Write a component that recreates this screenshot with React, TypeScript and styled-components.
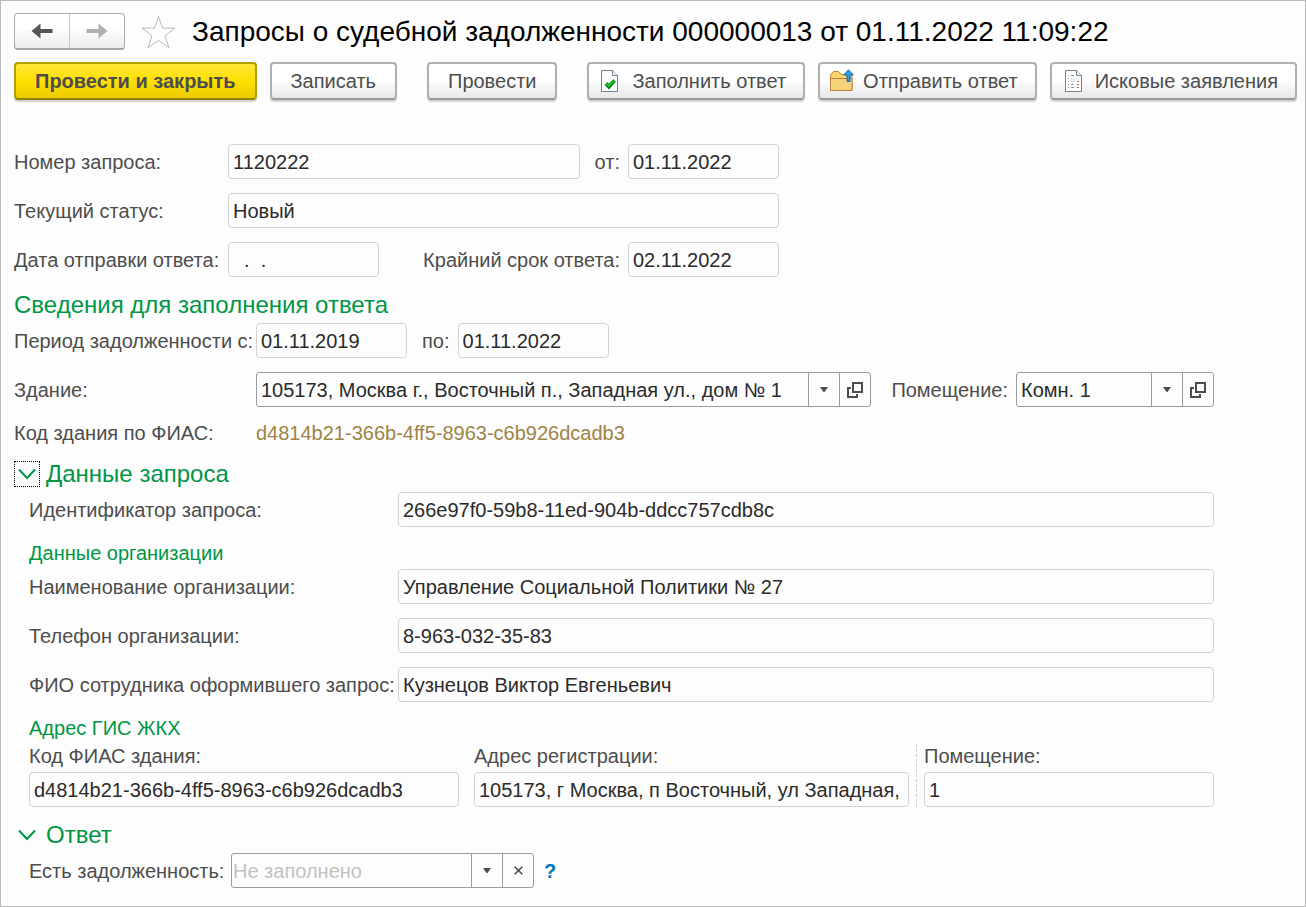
import React, { useId, useState } from "react";
import styled, { createGlobalStyle, css } from "styled-components";

const GlobalStyle = createGlobalStyle`
  *, *::before, *::after { box-sizing: border-box; }
  body { margin: 0; background: #fdfdfd; }
  body, button, input {
    font-family: "Liberation Sans", Arial, sans-serif;
    font-size: 20px;
    line-height: 24px;
  }
  h1, h2, h3, p { margin: 0; font-weight: normal; }
  button { cursor: pointer; }
`;

const Window = styled.main`
  min-height: 100vh;
  padding: 12px 5px 12px 13px;
  border: 1px solid #b9b9b9;
  color: #4d4d4d;
`;

const TitleBar = styled.header`
  display: flex;
  align-items: center;
  height: 37px;
`;

const History = styled.nav`
  display: flex;
  width: 111px;
  height: 37px;
  border: 1px solid #aeaeae;
  border-bottom: 2px solid #a3a3a3;
  border-radius: 4px;
  background: linear-gradient(#ffffff 40%, #ececec);
`;

const HistoryButton = styled.button`
  display: flex;
  flex: 1;
  align-items: center;
  justify-content: center;
  padding: 0;
  border: 0;
  background: none;
  color: #555555;
  & + & { border-left: 1px solid #c8c8c8; }
  &:disabled { color: #b0b0b0; }
`;

const StarButton = styled.button`
  display: flex;
  margin: 0 16px;
  padding: 0;
  border: 0;
  background: none;
`;

const Title = styled.h1`
  color: #000000;
  font-size: 28px;
  line-height: 36px;
  white-space: nowrap;
`;

const Toolbar = styled.div`
  display: flex;
  gap: 30px;
  margin-top: 12px;
`;

const ToolGroup = styled.div`
  display: flex;
  gap: 13px;
`;

const ToolButton = styled.button<{ $primary?: boolean; $icon?: boolean }>`
  display: flex;
  align-items: center;
  gap: 9px;
  height: 38px;
  padding: ${(p) => (p.$icon ? "0 17px 0 10px" : "0 19px")};
  border: 2px solid #b0b0b0;
  border-bottom-color: #999999;
  border-radius: 4px;
  background: linear-gradient(#ffffff 45%, #e8e8e8);
  box-shadow: 0 2px 1px #d2d2d2;
  color: #4d4d4d;
  white-space: nowrap;
  ${(p) =>
    p.$primary &&
    css`
      border-color: #b39e00;
      border-bottom-color: #948200;
      background: linear-gradient(#ffe737, #ffe000 50%, #ebcb00);
      font-weight: bold;
    `}
`;

const Form = styled.form`
  margin: 44px 86px 0 0;
`;

const Stack = styled.div`
  display: flex;
  flex-direction: column;
  gap: 14px;
`;

const Row = styled.div<{ $gap?: number }>`
  display: flex;
  align-items: center;
  gap: ${(p) => p.$gap ?? 0}px;
`;

const HeadFields = styled.div`
  display: flex;
  justify-content: space-between;
  gap: 15px;
  width: 551px;
`;

const Label = styled.label<{ $width?: number }>`
  flex: none;
  width: ${(p) => (p.$width ? `${p.$width}px` : "auto")};
  white-space: nowrap;
`;

const Input = styled.input<{ $date?: boolean }>`
  flex: ${(p) => (p.$date ? "none" : "1")};
  width: ${(p) => (p.$date ? "151px" : "100%")};
  min-width: 0;
  height: 35px;
  padding: 1px 4px 0;
  border: 1px solid #d3d3d3;
  border-radius: 4px;
  outline: none;
  background: #fdfdfd;
  color: #2b2b2b;
`;

const ComboBox = styled.div<{ $width?: number }>`
  display: flex;
  flex: ${(p) => (p.$width ? "none" : "1")};
  width: ${(p) => (p.$width ? `${p.$width}px` : "auto")};
  height: 35px;
  border: 1px solid #9c9c9c;
  border-radius: 3px;
`;

const ComboInput = styled.input`
  flex: 1;
  width: 0;
  min-width: 0;
  padding: 0 4px;
  border: 0;
  outline: none;
  background: none;
  color: #2b2b2b;
  &::placeholder { color: #c2c2c2; opacity: 1; }
  &:placeholder-shown { padding-left: 1px; }
`;

const ComboButton = styled.button`
  display: flex;
  flex: none;
  align-items: center;
  justify-content: center;
  width: 31px;
  padding: 0;
  border: 0;
  border-left: 1px solid #9c9c9c;
  background: none;
  color: #4d4d4d;
`;

const SectionTitle = styled.h2`
  display: flex;
  align-items: center;
  gap: 6px;
  margin: 14px 0 4px;
  color: #009646;
  font-size: 24px;
  line-height: 28px;
`;

const SubTitle = styled.h3`
  margin: 14px 0 4px;
  color: #009646;
  font-size: 20px;
  line-height: 24px;
`;

const Toggle = styled.button<{ $focused?: boolean }>`
  display: flex;
  align-items: center;
  justify-content: center;
  width: 26px;
  height: 26px;
  padding: 0;
  border: 1px dotted ${(p) => (p.$focused ? "#000000" : "transparent")};
  background: none;
  color: #009646;
`;

const Indent = styled.div`
  padding-left: 15px;
`;

const RoomField = styled.div`
  display: flex;
  align-items: center;
  gap: 8px;
  margin-left: 20px;
`;

const CodeRow = styled(Row)`
  margin-top: 14px;
  line-height: 25px;
`;

const Code = styled.output`
  color: #9e8446;
`;

const AddressRow = styled.div`
  display: flex;
`;

const AddressColumn = styled.div<{ $grow: number; $gapAfter?: number; $divided?: boolean }>`
  display: flex;
  flex: ${(p) => p.$grow} 1 0;
  flex-direction: column;
  gap: 4px;
  min-width: 0;
  margin-right: ${(p) => p.$gapAfter ?? 0}px;
  ${(p) =>
    p.$divided &&
    css`
      padding-left: 7px;
      border-left: 1px dashed #cfcfcf;
    `}
  input { flex: none; }
`;

const Help = styled.button`
  margin-left: 10px;
  padding: 0;
  border: 0;
  background: none;
  color: #0077c0;
  font-weight: bold;
`;

const ArrowIcon = ({ flip }: { flip?: boolean }) => (
  <svg width="22" height="16" viewBox="0 0 22 16" aria-hidden="true">
    <path
      d={flip ? "M0.500 6h12V0.500L21.500 8l-9 7.500V10h-12z" : "M21.500 6h-12V0.500L0.500 8l9 7.500V10h12z"}
      fill="currentColor"
    />
  </svg>
);

const StarIcon = () => (
  <svg width="35" height="34" viewBox="0 0 35 34" aria-hidden="true">
    <path
      d="M17.500 1.500l4 11.600h12.500l-10 7.600 4 12-10.500-7.200-10.500 7.200 4-12-10-7.600h12.500z"
      fill="#ffffff"
      stroke="#b4bac2"
    />
  </svg>
);

const CheckedDocIcon = () => (
  <svg width="24" height="24" viewBox="0 0 24 24" aria-hidden="true">
    <path d="M2.500 1.500h11l5 5v16h-16z" fill="#ffffff" stroke="#718096" />
    <path d="M13.500 1.500v5h5" fill="#edf1f6" stroke="#718096" />
    <path d="M7 14.500l3 3 5.500-6" fill="none" stroke="#0a7d1c" strokeWidth="4" />
    <path d="M7.500 14.500l2.500 2.300 5-5.300" fill="none" stroke="#18c226" strokeWidth="2.200" />
  </svg>
);

const FolderUpIcon = () => (
  <svg width="24" height="24" viewBox="0 0 24 24" aria-hidden="true">
    <path d="M.5 21.500V6l3-3.500h5l3 3h10.500v16z" fill="#f8d56c" stroke="#bd8440" />
    <path d="M.5 9.500h21.500v12H.5z" fill="#f6d27a" stroke="#bd8440" />
    <path d="M18.500.800l4.800 5.200h-3.300v6.500h-3V6h-3.300z" fill="#2aa4ea" stroke="#14699f" />
  </svg>
);

const ListDocIcon = () => (
  <svg width="24" height="24" viewBox="0 0 24 24" aria-hidden="true">
    <path d="M3.500 1.500h11l5 5v16h-16z" fill="#ffffff" stroke="#718096" />
    <path d="M14.500 1.500v5h5" fill="#edf1f6" stroke="#718096" />
    <path d="M6 6.500h1M9 6.500h3M6 9.500h1M6 12.500h1M6 15.500h1M6 18.500h1M9 15.500h3M9 18.500h3" stroke="#8795a8" />
    <circle cx="10.500" cy="11.500" r="1.500" fill="none" stroke="#c3cad3" />
    <path d="M15 12.500h2M15 15.500h2M15 18.500h2" stroke="#e8604c" />
  </svg>
);

const CaretIcon = () => (
  <svg width="8" height="5" viewBox="0 0 8 5" aria-hidden="true">
    <path d="M0 0h8L4.500 5h-1z" fill="currentColor" />
  </svg>
);

const OpenIcon = () => (
  <svg width="16" height="16" viewBox="0 0 16 16" fill="none" stroke="currentColor" strokeWidth="2" aria-hidden="true">
    <path d="M6 1h9v9H6z" />
    <path d="M4 6H1v9h9v-3" />
  </svg>
);

const CrossIcon = () => (
  <svg width="9" height="9" viewBox="0 0 9 9" aria-hidden="true">
    <path d="M.7.700l7.600 7.600M8.300.700L.7 8.300" stroke="currentColor" strokeWidth="1.600" />
  </svg>
);

const ChevronIcon = () => (
  <svg width="18" height="12" viewBox="0 0 18 12" aria-hidden="true">
    <path d="M1 1.500l8 8.500 8-8.500" fill="none" stroke="currentColor" strokeWidth="2" />
  </svg>
);

interface FieldProps {
  label: string;
  value: string;
  labelWidth?: number;
  date?: boolean;
  gap?: number;
}

function Field({ label, value, labelWidth, date, gap }: FieldProps) {
  const id = useId();
  return (
    <Row $gap={gap}>
      <Label htmlFor={id} $width={labelWidth}>{label}</Label>
      <Input id={id} defaultValue={value} $date={date} />
    </Row>
  );
}

interface ComboProps {
  id: string;
  value?: string;
  placeholder?: string;
  width?: number;
  clearable?: boolean;
}

function Combo({ id, value = "", placeholder, width, clearable }: ComboProps) {
  const [text, setText] = useState(value);
  return (
    <ComboBox $width={width}>
      <ComboInput id={id} value={text} placeholder={placeholder} onChange={(e) => setText(e.target.value)} />
      <ComboButton type="button" aria-label="Выбрать из списка"><CaretIcon /></ComboButton>
      {clearable ? (
        <ComboButton type="button" aria-label="Очистить" onClick={() => setText("")}><CrossIcon /></ComboButton>
      ) : (
        <ComboButton type="button" aria-label="Открыть"><OpenIcon /></ComboButton>
      )}
    </ComboBox>
  );
}

interface SectionProps {
  title: string;
  focused?: boolean;
  children: React.ReactNode;
}

function Section({ title, focused, children }: SectionProps) {
  const [open, setOpen] = useState(true);
  return (
    <section>
      <SectionTitle>
        <Toggle type="button" $focused={focused} aria-expanded={open} aria-label={title} onClick={() => setOpen(!open)}>
          <ChevronIcon />
        </Toggle>
        {title}
      </SectionTitle>
      {open && <Indent>{children}</Indent>}
    </section>
  );
}

export default function App() {
  return (
    <>
      <GlobalStyle />
      <Window>
        <TitleBar>
          <History aria-label="История">
            <HistoryButton type="button" aria-label="Назад"><ArrowIcon /></HistoryButton>
            <HistoryButton type="button" aria-label="Вперед" disabled><ArrowIcon flip /></HistoryButton>
          </History>
          <StarButton type="button" aria-label="В избранное"><StarIcon /></StarButton>
          <Title>Запросы о судебной задолженности 000000013 от 01.11.2022 11:09:22</Title>
        </TitleBar>

        <Toolbar>
          <ToolGroup>
            <ToolButton type="button" $primary>Провести и закрыть</ToolButton>
            <ToolButton type="button">Записать</ToolButton>
          </ToolGroup>
          <ToolButton type="button">Провести</ToolButton>
          <ToolGroup>
            <ToolButton type="button" $icon><CheckedDocIcon />Заполнить ответ</ToolButton>
            <ToolButton type="button" $icon><FolderUpIcon />Отправить ответ</ToolButton>
            <ToolButton type="button" $icon><ListDocIcon />Исковые заявления</ToolButton>
          </ToolGroup>
        </Toolbar>

        <Form onSubmit={(e) => e.preventDefault()}>
          <Stack>
            <Row>
              <Label htmlFor="number" $width={214}>Номер запроса:</Label>
              <HeadFields>
                <Input id="number" defaultValue="1120222" />
                <Field label="от:" value="01.11.2022" date gap={8} />
              </HeadFields>
            </Row>
            <Row>
              <Label htmlFor="status" $width={214}>Текущий статус:</Label>
              <HeadFields>
                <Input id="status" defaultValue="Новый" />
              </HeadFields>
            </Row>
            <Row>
              <Label htmlFor="sent" $width={214}>Дата отправки ответа:</Label>
              <HeadFields>
                <Input id="sent" defaultValue="  .  ." $date />
                <Field label="Крайний срок ответа:" value="02.11.2022" date gap={8} />
              </HeadFields>
            </Row>
          </Stack>

          <SectionTitle>Сведения для заполнения ответа</SectionTitle>
          <Stack>
            <Row $gap={15}>
              <Field label="Период задолженности с:" value="01.11.2019" labelWidth={242} date />
              <Field label="по:" value="01.11.2022" date gap={8} />
            </Row>
            <Row>
              <Label htmlFor="building" $width={242}>Здание:</Label>
              <Combo id="building" value="105173, Москва г., Восточный п., Западная ул., дом № 1" />
              <RoomField>
                <Label htmlFor="room">Помещение:</Label>
                <Combo id="room" value="Комн. 1" width={198} />
              </RoomField>
            </Row>
          </Stack>
          <CodeRow>
            <Label htmlFor="fias" $width={242}>Код здания по ФИАС:</Label>
            <Code id="fias">d4814b21-366b-4ff5-8963-c6b926dcadb3</Code>
          </CodeRow>

          <Section title="Данные запроса" focused>
            <Field label="Идентификатор запроса:" value="266e97f0-59b8-11ed-904b-ddcc757cdb8c" labelWidth={369} />
            <SubTitle>Данные организации</SubTitle>
            <Stack>
              <Field label="Наименование организации:" value="Управление Социальной Политики № 27" labelWidth={369} />
              <Field label="Телефон организации:" value="8-963-032-35-83" labelWidth={369} />
              <Field label="ФИО сотрудника оформившего запрос:" value="Кузнецов Виктор Евгеньевич" labelWidth={369} />
            </Stack>
            <SubTitle>Адрес ГИС ЖКХ</SubTitle>
            <AddressRow>
              <AddressColumn $grow={430} $gapAfter={15}>
                <Label htmlFor="gis-code">Код ФИАС здания:</Label>
                <Input id="gis-code" defaultValue="d4814b21-366b-4ff5-8963-c6b926dcadb3" />
              </AddressColumn>
              <AddressColumn $grow={435} $gapAfter={7}>
                <Label htmlFor="gis-address">Адрес регистрации:</Label>
                <Input id="gis-address" defaultValue="105173, г Москва, п Восточный, ул Западная," />
              </AddressColumn>
              <AddressColumn $grow={290} $divided>
                <Label htmlFor="gis-room">Помещение:</Label>
                <Input id="gis-room" defaultValue="1" />
              </AddressColumn>
            </AddressRow>
          </Section>

          <Section title="Ответ">
            <Row>
              <Label htmlFor="debt" $width={202}>Есть задолженность:</Label>
              <Combo id="debt" placeholder="Не заполнено" width={303} clearable />
              <Help type="button" aria-label="Справка">?</Help>
            </Row>
          </Section>
        </Form>
      </Window>
    </>
  );
}
